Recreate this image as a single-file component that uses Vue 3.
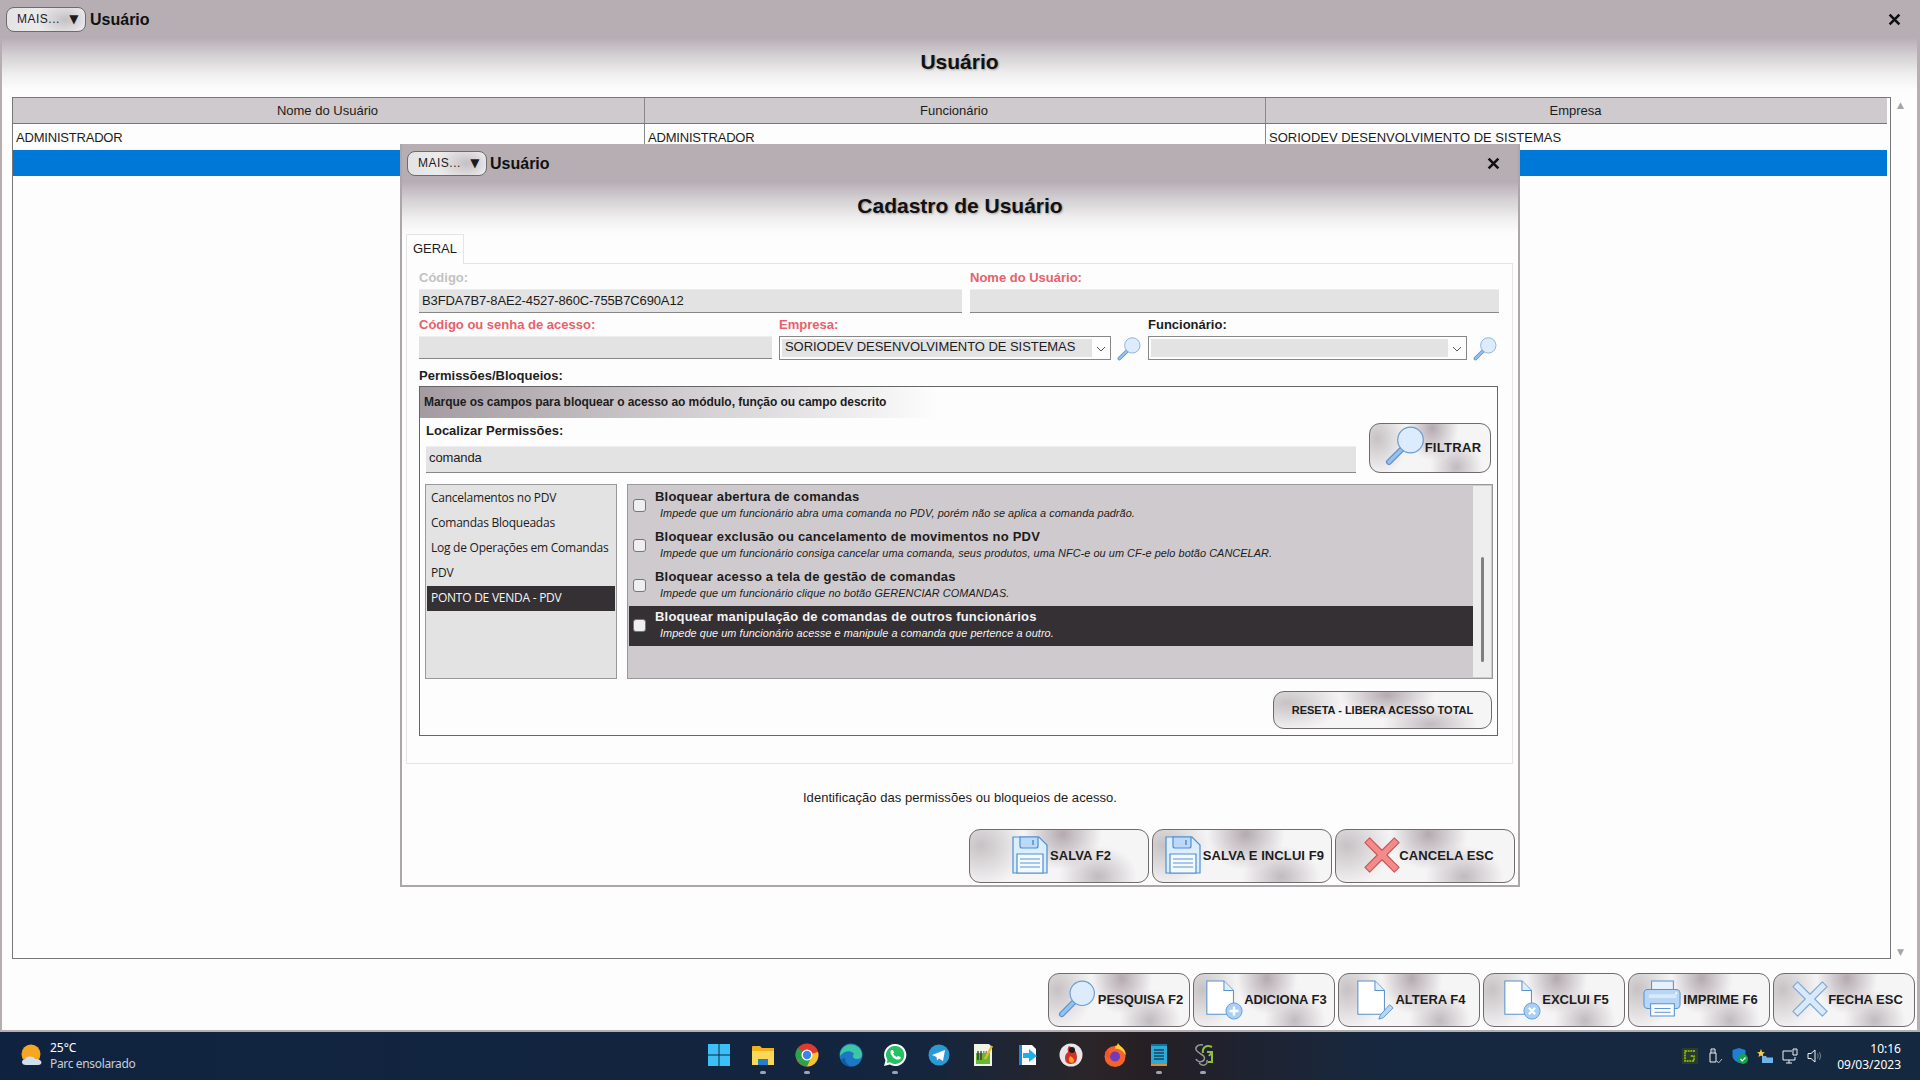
<template>
  <div class="desktop">
    <!-- sprites shared by the buttons -->
    <svg class="sprites" width="0" height="0">
      <symbol id="mag" viewBox="0 0 40 40">
        <path d="M16 24 4 36" stroke="#5b8fc9" stroke-width="6" stroke-linecap="round" />
        <path d="M16 24 4 36" stroke="#93c1f0" stroke-width="3.6" stroke-linecap="round" />
        <circle cx="25.5" cy="14" r="12.8" fill="#dcecfc" stroke="#6a9bd1" stroke-width="1.2" />
      </symbol>
      <symbol id="floppy" viewBox="0 0 36 38">
        <path d="M1 1H27L35 9V37H1Z" fill="#dcedfd" stroke="#4f8fd0" stroke-width="1.2" />
        <path d="M8 1H26V10Q26 12 24 12H10Q8 12 8 10Z" fill="#bcdaf7" stroke="#4f8fd0" stroke-width="1.2" />
        <path d="M21 4V9" stroke="#4f8fd0" stroke-width="1.5" />
        <path d="M5 18H31V37H5Z" fill="#f4f9fe" stroke="#4f8fd0" stroke-width="1.2" />
        <path d="M8 23H28M8 27H28M8 31H28" stroke="#5b96d2" stroke-width="1" />
      </symbol>
      <symbol id="cross" viewBox="0 0 40 40">
        <path d="M7 2 20 15 33 2 38 7 25 20 38 33 33 38 20 25 7 38 2 33 15 20 2 7Z" stroke-width="1.2" stroke-linejoin="round" />
      </symbol>
      <symbol id="doc" viewBox="0 0 40 40">
        <path d="M3 1H21L31 11V36H3Z" fill="#fff" stroke="#5a92cc" stroke-width="1.1" />
        <path d="M21 1V11H31" fill="#e0eefc" stroke="#5a92cc" stroke-width="1.1" />
      </symbol>
      <symbol id="printer" viewBox="0 0 40 40">
        <path d="M9 1H32V14H9Z" fill="#e6f1fd" stroke="#5a92cc" stroke-width="1.1" />
        <rect x="1" y="10" width="38" height="20" rx="4" fill="#b7d5f4" stroke="#5a92cc" stroke-width="1.1" />
        <path d="M6 15H35V19H6Z" fill="#d9e9fa" />
        <circle cx="35" cy="14" r="1" fill="#fff" />
        <path d="M8 25H33V38H8Z" fill="#f7fbff" stroke="#5a92cc" stroke-width="1.1" />
        <path d="M12 30H29M12 34H29" stroke="#5a92cc" stroke-width="1" />
      </symbol>
    </svg>

    <div class="win">
      <div class="head">
        <div class="head-bar">
          <button class="more">MAIS...<span class="more-arrow">▼</span></button>
          <span class="head-name">Usuário</span>
          <svg class="close" viewBox="0 0 12 12"><path d="M1.5 1.5 10.5 10.5M10.5 1.5 1.5 10.5" stroke="#111" stroke-width="2.4" /></svg>
        </div>
        <div class="head-title">Usuário</div>
      </div>

      <div class="grid-area">
        <div class="grid-box">
          <div class="grid-row grid-header">
            <div v-for="col in columns" :key="col" class="grid-cell">{{ col }}</div>
          </div>
          <div class="grid-row">
            <div v-for="cell in userRow" :key="cell" class="grid-cell data">{{ cell }}</div>
          </div>
          <div class="grid-row selected" />
        </div>
        <div class="vscroll">
          <span>▲</span>
          <span>▼</span>
        </div>
      </div>

      <div class="toolbar">
        <button v-for="btn in toolbarButtons" :key="btn.label" class="action">
          <span class="icon-box">
            <svg v-if="btn.icon === 'fecha'" class="ic-x blue"><use href="#cross" /></svg>
            <svg v-else class="ic"><use :href="'#' + btn.icon" /></svg>
            <svg v-if="btn.badge === 'plus'" class="badge" viewBox="0 0 20 20">
              <circle cx="10" cy="10" r="9" fill="#a9cff5" stroke="#5f9ad8" />
              <path d="M10 5V15M5 10H15" stroke="#fff" stroke-width="2.6" />
            </svg>
            <svg v-if="btn.badge === 'x'" class="badge" viewBox="0 0 20 20">
              <circle cx="10" cy="10" r="9" fill="#a9cff5" stroke="#5f9ad8" />
              <path d="M6.5 6.5 13.5 13.5M13.5 6.5 6.5 13.5" stroke="#fff" stroke-width="2.4" />
            </svg>
            <svg v-if="btn.badge === 'pen'" class="badge pen" viewBox="0 0 20 20">
              <path d="M4 14 14 3 18 6.5 7 17.5 2 19Z" fill="#b7d5f4" stroke="#5a92cc" />
            </svg>
          </span>
          <span>{{ btn.label }}</span>
        </button>
      </div>
    </div>

    <!-- janela de cadastro -->
    <div class="dialog">
      <div class="head">
        <div class="head-bar">
          <button class="more">MAIS...<span class="more-arrow">▼</span></button>
          <span class="head-name">Usuário</span>
          <svg class="close" viewBox="0 0 12 12"><path d="M1.5 1.5 10.5 10.5M10.5 1.5 1.5 10.5" stroke="#111" stroke-width="2.4" /></svg>
        </div>
        <div class="head-title">Cadastro de Usuário</div>
      </div>

      <div class="tabs"><div class="tab">GERAL</div></div>

      <div class="pane">
        <div class="form-row first">
          <div class="field w-code">
            <label class="muted">Código:</label>
            <div class="input">B3FDA7B7-8AE2-4527-860C-755B7C690A12</div>
          </div>
          <div class="field w-name">
            <label class="required">Nome do Usuário:</label>
            <div class="input" />
          </div>
        </div>

        <div class="form-row second">
          <div class="field w-pass">
            <label class="required">Código ou senha de acesso:</label>
            <div class="input short" />
          </div>
          <div class="field w-company">
            <label class="required">Empresa:</label>
            <div class="select">
              <div class="select-value">SORIODEV DESENVOLVIMENTO DE SISTEMAS</div>
              <svg class="chevron" viewBox="0 0 10 6"><path d="M1 1 5 5 9 1" fill="none" stroke="#555" /></svg>
            </div>
          </div>
          <svg class="lookup"><use href="#mag" /></svg>
          <div class="field w-worker">
            <label>Funcionário:</label>
            <div class="select">
              <div class="select-value" />
              <svg class="chevron" viewBox="0 0 10 6"><path d="M1 1 5 5 9 1" fill="none" stroke="#555" /></svg>
            </div>
          </div>
          <svg class="lookup"><use href="#mag" /></svg>
        </div>

        <label class="perm-label">Permissões/Bloqueios:</label>
        <div class="perm-box">
          <div class="perm-strip">Marque os campos para bloquear o acesso ao módulo, função ou campo descrito</div>

          <div class="search-row">
            <div class="search-field">
              <label>Localizar Permissões:</label>
              <div class="input search-input">comanda</div>
            </div>
            <button class="action filter">
              <svg class="filter-ic"><use href="#mag" /></svg>
              <span>FILTRAR</span>
            </button>
          </div>

          <div class="lists">
            <div class="modules">
              <div
                v-for="mod in modules"
                :key="mod"
                class="module"
                :class="{ active: mod === 'PONTO DE VENDA - PDV' }"
              >
                {{ mod }}
              </div>
            </div>
            <div class="perms">
              <div class="perm-rows">
                <div v-for="perm in permissions" :key="perm.title" class="perm" :class="{ active: perm.active }">
                  <input type="checkbox" class="check" />
                  <div>
                    <div class="perm-title">{{ perm.title }}</div>
                    <div class="perm-desc">{{ perm.desc }}</div>
                  </div>
                </div>
              </div>
              <div class="perm-scroll"><div class="perm-thumb" /></div>
            </div>
          </div>

          <div class="reset-row">
            <button class="action reset">RESETA - LIBERA ACESSO TOTAL</button>
          </div>
        </div>
      </div>

      <div class="hint">Identificação das permissões ou bloqueios de acesso.</div>

      <div class="dialog-actions">
        <button v-for="btn in dialogButtons" :key="btn.label" class="action">
          <svg v-if="btn.icon === 'cancel'" class="ic-x red"><use href="#cross" /></svg>
          <svg v-else class="ic"><use href="#floppy" /></svg>
          <span>{{ btn.label }}</span>
        </button>
      </div>
    </div>

    <!-- barra de tarefas -->
    <div class="taskbar">
      <div class="weather">
        <svg class="weather-ic" viewBox="0 0 24 24">
          <circle cx="11" cy="10" r="9.5" fill="#f5a623" />
          <path d="M6 21Q2 21 2 18 2 15.500 5 15.500 6 12.500 10 12.500 14 12.500 15 15 20 14.500 21.500 18 21.500 21 18 21Z" fill="#cfe0f2" />
        </svg>
        <div>
          <div class="temp">25°C</div>
          <div class="sky">Parc ensolarado</div>
        </div>
      </div>

      <div class="apps">
        <div class="app">
          <svg viewBox="0 0 24 24">
            <path d="M1 1H11.500V11.500H1ZM12.500 1H23V11.500H12.500ZM1 12.500H11.500V23H1ZM12.500 12.500H23V23H12.500Z" fill="#3cc0f7" />
          </svg>
        </div>
        <div class="app on">
          <svg viewBox="0 0 24 24">
            <path d="M1 4Q1 3 2 3H9L11 5H23V22H1Z" fill="#f2b01e" />
            <path d="M1 8H23V22H1Z" fill="#fbd758" />
            <path d="M7 16H17V22H7Z" fill="#1f7fd0" />
          </svg>
        </div>
        <div class="app on">
          <svg viewBox="0 0 24 24">
            <circle cx="12" cy="12" r="11.500" fill="#e0392f" />
            <path d="M12 12 2.500 18A11.500 11.500 0 0 1 3 5L12 12Z" fill="#2ba24c" />
            <path d="M12 12 23 9A11.500 11.500 0 0 1 12 23.500L2.500 18Z" fill="#f7c52b" />
            <path d="M12 12 2.500 18A11.500 11.500 0 0 0 12 23.500L16 15Z" fill="#2ba24c" />
            <circle cx="12" cy="12" r="5.500" fill="#fff" />
            <circle cx="12" cy="12" r="4.200" fill="#3f83e8" />
          </svg>
        </div>
        <div class="app">
          <svg viewBox="0 0 24 24">
            <circle cx="12" cy="12" r="11.500" fill="#1b78c4" />
            <path d="M1 13A11 11 0 0 1 23 12C23 15 20 16.500 17 16 14 15.500 13 13 15 11 13 7 5 7 1 13Z" fill="#3cc6a3" />
            <path d="M6 15Q6 21 12 23.500 5 23 2 17 3 15 6 15Z" fill="#0f5aa0" />
          </svg>
        </div>
        <div class="app on">
          <svg viewBox="0 0 24 24">
            <path d="M12 1A11 11 0 0 0 2.500 17.500L1 23 6.800 21.500A11 11 0 1 0 12 1Z" fill="#fff" />
            <path d="M12 3A9 9 0 0 0 4.500 17L3.700 20 7 19.300A9 9 0 1 0 12 3Z" fill="#25c063" />
            <path d="M8.500 7C7 8 7 10 9 13S14 17 16 16.500 18 14.500 17.500 14L15 13 14 14C12.500 13.500 10.800 12 10 10.500L11 9.500 10 7Z" fill="#fff" />
          </svg>
        </div>
        <div class="app">
          <svg viewBox="0 0 24 24">
            <circle cx="12" cy="12" r="10.500" fill="#2a9ad6" />
            <path d="M5 12 18 7 16 18 12 15.500 10 17.500 9.500 14Z" fill="#fff" />
          </svg>
        </div>
        <div class="app">
          <svg viewBox="0 0 24 24">
            <path d="M3 1H18L21 4V23H3Z" fill="#eff5e2" />
            <path d="M5 10H19V21H5Z" fill="#6ab536" />
            <path d="M7 8V17M10 8V17" stroke="#222" stroke-width="1.200" />
            <path d="M12 9H16" stroke="#222" stroke-dasharray="1.500 1" />
            <path d="M14 16 21 3" stroke="#e7b92c" stroke-width="2.400" />
          </svg>
        </div>
        <div class="app">
          <svg viewBox="0 0 24 24">
            <path d="M4 2H17L21 6V22H4Z" fill="#fff" />
            <path d="M4 2H7V22H4Z" fill="#1f86d8" />
            <path d="M8 10H14V6L22 13 14 19V15H8Z" fill="#1eb0ea" />
          </svg>
        </div>
        <div class="app">
          <svg viewBox="0 0 24 24">
            <circle cx="12" cy="12" r="11.500" fill="#e8e6e8" />
            <path d="M10 3Q18 6 18 14 18 21 12 21 6 21 6 15 6 11 9 9 8 5 10 3Z" fill="#d3302c" />
            <circle cx="13" cy="7" r="3" fill="#1a1a1a" />
            <path d="M12 20Q8 18 11 13 15 15 15 17.500 15 20 12 20Z" fill="#f9a11b" />
          </svg>
        </div>
        <div class="app">
          <svg viewBox="0 0 24 24">
            <circle cx="12" cy="13.500" r="10.500" fill="#f4632b" />
            <path d="M12 3C18 1 23 7 23 13 21 7 17 5 12 6Z" fill="#fbb02e" />
            <path d="M15 0C16 3 22 5 22.500 12 19 6 15 6 13 5Z" fill="#ffcf3a" />
            <circle cx="12" cy="13.500" r="5" fill="#6e3dbd" />
            <path d="M2 9Q4 7 6 7 5 10 8 11 6 13 7 16 3 15 2 9Z" fill="#f9502f" />
          </svg>
        </div>
        <div class="app on">
          <svg viewBox="0 0 24 24">
            <path d="M4 1H20V22H4Z" fill="#2ca9d6" />
            <path d="M4 1H20V3H4Z" fill="#1b6f96" />
            <path d="M7 7H17M7 10H17M7 13H17M7 16H17" stroke="#13455f" stroke-width="1.300" />
            <path d="M4 21H20V23H4Z" fill="#e08b2c" />
          </svg>
        </div>
        <div class="app on">
          <svg viewBox="0 0 24 24">
            <path d="M12 2C5 1 3 6 7 9 11 12 15 13 13 17 11 20 6 19 5 16M8 20C12 24 17 22 16 17" fill="none" stroke="#9a9a9a" stroke-width="1.500" />
            <path d="M21 4C15 1 11 5 12 10M16 9H21V19H17M18 13 21 9" fill="none" stroke="#8fbf3a" stroke-width="2" />
          </svg>
        </div>
      </div>

      <div class="tray">
        <svg viewBox="0 0 16 16">
          <rect width="16" height="16" fill="#2c3a32" />
          <path d="M13 3H3V13H12V8H8" fill="none" stroke="#97d400" stroke-width="1.500" stroke-dasharray="2 .7" />
        </svg>
        <svg viewBox="0 0 16 16" fill="none" stroke="#eef2f6">
          <path d="M3 5V14H9V5ZM4 5V1H8V5M5 3H5.500M6.500 3H7" />
          <path d="M10 13 11.500 15 15 11" stroke="#aeb9c5" />
        </svg>
        <svg viewBox="0 0 16 16">
          <path d="M7 0 13.500 2V8Q13.500 12 7 15 .5 12 .5 8V2Z" fill="#1f7fd0" />
          <circle cx="11" cy="11" r="5" fill="#16a34a" />
          <path d="M8.500 11 10.300 12.800 13.500 9.500" fill="none" stroke="#fff" stroke-width="1.200" />
        </svg>
        <svg viewBox="0 0 16 16">
          <path d="M4 1 5.200 4 8 4.200 5.800 6 6.500 9 4 7.400 1.500 9 2.200 6 0 4.200 2.800 4Z" fill="#f5c84b" />
          <path d="M5 8H9L10 9.500H16V15H5Z" fill="#6fb3ea" />
        </svg>
        <svg viewBox="0 0 16 16" fill="none" stroke="#eef2f6">
          <path d="M10 3H1V12H13V9M7 12V15M4 15H10" />
          <path d="M11 1H15V7H11ZM13 2.500V3" />
        </svg>
        <svg viewBox="0 0 16 16" fill="none" stroke="#eef2f6">
          <path d="M1 5.500H4L8 2V14L4 10.500H1Z" />
          <path d="M10.500 5.500Q12 8 10.500 10.500M12.500 4Q15 8 12.500 12" stroke="#76828f" />
        </svg>
        <div class="clock">
          <div>10:16</div>
          <div>09/03/2023</div>
        </div>
      </div>
    </div>
  </div>
</template>

<script setup>
const columns = ['Nome do Usuário', 'Funcionário', 'Empresa']
const userRow = ['ADMINISTRADOR', 'ADMINISTRADOR ', 'SORIODEV DESENVOLVIMENTO DE SISTEMAS']

const toolbarButtons = [
  { label: 'PESQUISA F2', icon: 'mag' },
  { label: 'ADICIONA F3', icon: 'doc', badge: 'plus' },
  { label: 'ALTERA F4', icon: 'doc', badge: 'pen' },
  { label: 'EXCLUI F5', icon: 'doc', badge: 'x' },
  { label: 'IMPRIME F6', icon: 'printer' },
  { label: 'FECHA ESC', icon: 'fecha' }
]

const dialogButtons = [
  { label: 'SALVA F2', icon: 'floppy' },
  { label: 'SALVA E INCLUI F9', icon: 'floppy' },
  { label: 'CANCELA ESC', icon: 'cancel' }
]

const modules = [
  'Cancelamentos no PDV',
  'Comandas Bloqueadas',
  'Log de Operações em Comandas',
  'PDV',
  'PONTO DE VENDA - PDV'
]

const permissions = [
  {
    title: 'Bloquear abertura de comandas',
    desc: 'Impede que um funcionário abra uma comanda no PDV, porém não se aplica a comanda padrão.'
  },
  {
    title: 'Bloquear exclusão ou cancelamento de movimentos no PDV',
    desc: 'Impede que um funcionário consiga cancelar uma comanda, seus produtos, uma NFC-e ou um CF-e pelo botão CANCELAR.'
  },
  {
    title: 'Bloquear acesso a tela de gestão de comandas',
    desc: 'Impede que um funcionário clique no botão GERENCIAR COMANDAS.'
  },
  {
    title: 'Bloquear manipulação de comandas de outros funcionários',
    desc: 'Impede que um funcionário acesse e manipule a comanda que pertence a outro.',
    active: true
  }
]
</script>

<style>
body {
  margin: 0;
  overflow: hidden;
}
</style>

<style scoped>
.desktop {
  position: relative;
  width: 1920px;
  height: 1080px;
  overflow: hidden;
  font-family: "Liberation Sans", Arial, sans-serif;
  font-size: 13px;
  color: #1c1c1c;
  background: #fdfdfd;
}

.sprites {
  position: absolute;
}

.win {
  box-sizing: border-box;
  height: 1032px;
  display: flex;
  flex-direction: column;
  border-left: 2px solid #b7aeb4;
  border-right: 3px solid #b7aeb4;
  border-bottom: 2px solid #b7aeb4;
}

.head {
  height: 90px;
  flex: none;
  background: linear-gradient(#b7aeb4 0, #b7aeb4 38px, #d5d1d4 56px, #f2f1f2 76px, #fdfdfd 90px);
}

.head-bar {
  height: 39px;
  display: flex;
  align-items: center;
  padding: 0 16px 0 4px;
  box-sizing: border-box;
}

.dialog .head-bar {
  padding-left: 5px;
  padding-right: 18px;
}

.more {
  box-sizing: border-box;
  flex: none;
  width: 80px;
  height: 25px;
  padding: 0 0 2px 10px;
  display: flex;
  align-items: center;
  justify-content: space-between;
  border: 1px solid #6e6a6d;
  border-radius: 8px;
  background: radial-gradient(ellipse 40% 90% at 75% 50%, #c5bfc3, transparent), linear-gradient(90deg, #e4e2e3, #fbfbfb);
  font-family: inherit;
  font-size: 12px;
  letter-spacing: 0.5px;
  color: #1c1c1c;
}

.more-arrow {
  font-family: "DejaVu Sans", sans-serif;
  font-size: 12px;
  margin-right: 6px;
}

.head-name {
  margin-left: 4px;
  font-size: 16px;
  font-weight: 700;
  color: #111;
}

.dialog .head-name {
  margin-left: 3px;
}

.close {
  width: 13px;
  height: 13px;
  margin-left: auto;
}

.head-title {
  margin-top: 11px;
  text-align: center;
  font-size: 21px;
  line-height: 24px;
  font-weight: 700;
  color: #111;
  text-shadow: 1px 1px 2px rgba(0, 0, 0, 0.3);
}

.grid-area {
  display: flex;
  height: 862px;
  margin: 7px 0 0 10px;
}

.grid-box {
  box-sizing: border-box;
  width: 1879px;
  padding-right: 3px;
  border: 1px solid #777;
}

.grid-row {
  display: grid;
  grid-template-columns: 631px 621px 622px;
  height: 26px;
}

.grid-header {
  box-sizing: border-box;
  background: #cfcacd;
  border-bottom: 1px solid #777;
}

.grid-header .grid-cell {
  padding-right: 2px;
}

.grid-cell {
  display: flex;
  align-items: center;
  justify-content: center;
}

.grid-cell + .grid-cell {
  border-left: 1px solid #888;
}

.grid-cell.data {
  justify-content: flex-start;
  padding-left: 3px;
}

.grid-cell.data:not(:last-child) {
  letter-spacing: -0.2px;
}

.selected {
  background: #0078d7;
}

.vscroll {
  flex: 1;
  display: flex;
  flex-direction: column;
  justify-content: space-between;
  align-items: center;
  padding: 0 7px 2px 0;
  margin-top: 3px;
  font-family: "DejaVu Sans", sans-serif;
  font-size: 9px;
  color: #a5a5a5;
}

.toolbar {
  display: flex;
  justify-content: flex-end;
  gap: 3px;
  margin-top: 14px;
  padding-right: 2px;
}

.action {
  box-sizing: border-box;
  display: flex;
  align-items: center;
  justify-content: center;
  gap: 2px;
  width: 142px;
  height: 54px;
  padding: 0 0 2px 3px;
  border: 1px solid #6e6a6d;
  border-radius: 11px;
  background:
    radial-gradient(ellipse 22% 70% at 52% 8%, rgba(176, 166, 172, 0.95), transparent),
    radial-gradient(ellipse 26% 80% at 6% 30%, rgba(190, 185, 188, 0.85), transparent),
    radial-gradient(ellipse 22% 60% at 72% 90%, rgba(180, 172, 177, 0.8), transparent),
    #f6f5f6;
  font-family: inherit;
  font-size: 13px;
  font-weight: 700;
  color: #1c1c1c;
}

.icon-box {
  position: relative;
  display: block;
  width: 38px;
  height: 38px;
}

.ic {
  display: block;
  width: 38px;
  height: 38px;
}

.ic-x {
  display: block;
  width: 38px;
  height: 38px;
}

.ic-x.blue {
  margin-left: 3px;
  fill: #d7e9fb;
  stroke: #7fa9d4;
}

.ic-x.red {
  margin: 0 -4px 0 4px;
  fill: #f58a8a;
  stroke: #c45a5a;
}

.dialog-actions .ic {
  margin: 0 -1px 0 1px;
}

.badge {
  position: absolute;
  right: -1px;
  bottom: -2px;
  width: 18px;
  height: 18px;
}

.badge.pen {
  right: -2px;
}

.dialog {
  position: absolute;
  left: 400px;
  top: 144px;
  box-sizing: border-box;
  width: 1120px;
  height: 743px;
  border: 2px solid #aca5aa;
  border-top: 0;
  background: #fdfdfd;
}

.tabs {
  padding-left: 4px;
  display: flex;
}

.tab {
  box-sizing: border-box;
  width: 58px;
  height: 30px;
  margin-bottom: -1px;
  padding-top: 6px;
  text-align: center;
  background: #fdfdfd;
  border: 1px solid #e4e4e4;
  border-bottom: 0;
  position: relative;
}

.pane {
  box-sizing: border-box;
  height: 501px;
  margin: 0 5px 0 4px;
  padding: 6px 0 0 12px;
  border: 1px solid #e4e4e4;
}

.form-row {
  display: flex;
}

.form-row.first {
  gap: 8px;
}

.form-row.second {
  margin-top: 4px;
}

.field label,
.search-field label,
.perm-label {
  display: block;
  height: 16px;
  line-height: 16px;
  font-weight: 700;
}

.muted {
  color: #c2c2c2;
}

.required {
  color: #e8606b;
}

.w-code {
  width: 543px;
}

.w-name {
  width: 529px;
}

.w-pass {
  width: 353px;
  margin-right: 7px;
}

.w-company {
  width: 332px;
}

.w-worker {
  width: 319px;
}

.input {
  box-sizing: border-box;
  height: 24px;
  margin-top: 3px;
  padding-left: 3px;
  line-height: 21px;
  background: #e3e3e3;
  border-top: 1px solid #eee;
  border-bottom: 1px solid #888;
  letter-spacing: -0.12px;
}

.input.short {
  height: 23px;
}

.select {
  box-sizing: border-box;
  display: flex;
  align-items: center;
  height: 24px;
  margin-top: 3px;
  padding: 2px 0 2px 2px;
  border: 1px solid #888;
  background: #fdfdfd;
}

.select-value {
  flex: 1;
  height: 18px;
  padding-left: 3px;
  line-height: 15px;
  letter-spacing: -0.05px;
  background: #e3e3e3;
}

.chevron {
  width: 10px;
  height: 6px;
  margin: 1px 4px 0;
  flex: none;
}

.lookup {
  flex: none;
  width: 24px;
  height: 24px;
  margin: 20px 7px 0 6px;
}

.lookup:last-child {
  margin: 20px 0 0 6px;
}

.perm-label {
  margin-top: 7px;
  color: #222;
}

.perm-box {
  box-sizing: border-box;
  width: 1079px;
  height: 350px;
  margin-top: 2px;
  border: 1px solid #666;
}

.perm-strip {
  height: 31px;
  line-height: 30px;
  padding-left: 4px;
  font-size: 12px;
  font-weight: 700;
  letter-spacing: -0.05px;
  background: linear-gradient(90deg, #a39ba1, #fdfdfd 48%);
}

.search-row {
  display: flex;
  align-items: flex-start;
  gap: 13px;
  margin-top: 5px;
  padding-left: 6px;
}

.search-field {
  width: 930px;
}

.search-input {
  height: 27px;
  margin-top: 7px;
  line-height: 21px;
  font-size: 13px;
}

.filter {
  width: 122px;
  height: 50px;
  gap: 0;
  letter-spacing: 0.3px;
  padding-left: 6px;
}

.filter-ic {
  width: 40px;
  height: 40px;
  margin-bottom: 2px;
}

.lists {
  display: flex;
  gap: 10px;
  height: 195px;
  margin-top: 11px;
  padding-left: 5px;
}

.modules {
  box-sizing: border-box;
  width: 192px;
  padding: 1px;
  border: 1px solid #999;
  background: #e3e3e3;
  font-family: "Open Sans", sans-serif;
  font-size: 12px;
  letter-spacing: -0.25px;
}

.module {
  height: 25px;
  line-height: 24px;
  padding-left: 4px;
  white-space: nowrap;
}

.module.active {
  background: #353034;
  color: #f5f5f5;
}

.perms {
  box-sizing: border-box;
  display: flex;
  width: 866px;
  padding: 1px;
  border: 1px solid #999;
  background: #cfcacd;
}

.perm-rows {
  flex: 1;
}

.perm {
  box-sizing: border-box;
  display: flex;
  align-items: center;
  height: 40px;
  padding: 0 0 2px 4px;
}

.perm.active {
  background: #353034;
  color: #f3f3f3;
}

.check {
  appearance: none;
  flex: none;
  box-sizing: border-box;
  width: 13px;
  height: 13px;
  margin: 0 9px 0 0;
  border: 1px solid #767676;
  border-radius: 3px;
  background: #efefef;
}

.perm-title {
  font-weight: 700;
  line-height: 16px;
  letter-spacing: 0.2px;
}

.perm-desc {
  margin-left: 5px;
  font-size: 10.900px;
  font-style: italic;
  line-height: 16px;
  letter-spacing: 0.06px;
}

.perm-scroll {
  flex: none;
  width: 18px;
  background: #eee;
  display: flex;
  justify-content: center;
}

.perm-thumb {
  width: 3px;
  height: 105px;
  margin-top: 71px;
  background: #808080;
  border-radius: 2px;
}

.reset-row {
  display: flex;
  justify-content: flex-end;
  margin-top: 12px;
  padding-right: 5px;
}

.reset {
  width: 219px;
  height: 38px;
  padding: 0 0 1px;
  font-size: 11px;
}

.hint {
  margin-top: 26px;
  line-height: 16px;
  text-align: center;
  letter-spacing: 0.05px;
}

.dialog-actions {
  display: flex;
  justify-content: flex-end;
  gap: 3px;
  margin-top: 23px;
  padding-right: 3px;
}

.dialog-actions .action {
  width: 180px;
  letter-spacing: 0.1px;
}

.taskbar {
  display: grid;
  grid-template-columns: 1fr auto 1fr;
  height: 48px;
  background: linear-gradient(90deg, #0f2340 0, #14253e 48%, #2b2528 57%, #251f25 60%, #162840 72%, #14283f 100%);
  font-family: "Noto Sans", sans-serif;
  font-size: 12px;
  color: #fff;
}

.weather {
  display: flex;
  align-items: center;
  gap: 6px;
  padding-left: 20px;
}

.weather-ic {
  width: 24px;
  height: 24px;
}

.temp {
  line-height: 16px;
}

.sky {
  line-height: 16px;
  color: #c3cfdb;
  letter-spacing: -0.35px;
}

.apps {
  display: flex;
  padding-left: 1px;
}

.app {
  width: 44px;
  display: flex;
  flex-direction: column;
  align-items: center;
  padding-top: 11px;
}

.app svg {
  width: 24px;
  height: 24px;
  flex: none;
}

.app.on::after {
  content: "";
  width: 6px;
  height: 3px;
  margin-top: 4px;
  border-radius: 2px;
  background: #9aa5b1;
}

.tray {
  display: flex;
  align-items: center;
  justify-content: flex-end;
  gap: 9px;
  padding-right: 19px;
}

.tray svg {
  width: 16px;
  height: 16px;
}

.clock {
  margin-left: 5px;
  padding-top: 1px;
  text-align: right;
  line-height: 16px;
}
</style>
